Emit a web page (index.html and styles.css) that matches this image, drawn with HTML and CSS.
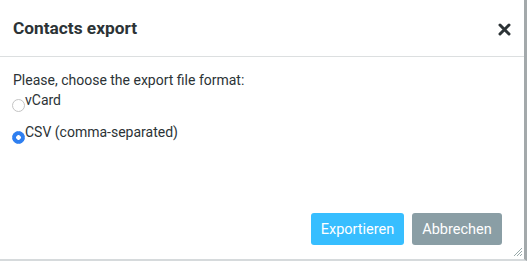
FILE: index.html
```html
<!DOCTYPE html>
<html>
<head>
<meta charset="utf-8">
<link rel="stylesheet" href="styles.css">
</head>
<body>
<div class="dialog">
  <div class="header">
    <h1 class="title">Contacts export</h1>
    <span class="close">
      <svg width="13" height="13" viewBox="0 0 13 13"><path d="M2 2L11 11M11 2L2 11" stroke="#2c3336" stroke-width="3" stroke-linecap="round"/></svg>
    </span>
  </div>
  <div class="content">
    <p class="prompt">Please, choose the export file format:</p>
    <label class="option"><span class="radio"></span>vCard</label>
    <label class="option"><span class="radio checked"></span>CSV (comma-separated)</label>
  </div>
  <div class="footer">
    <button class="btn primary">Exportieren</button>
    <button class="btn secondary">Abbrechen</button>
  </div>
  <span class="grip">
    <svg width="10" height="10" viewBox="0 0 10 10"><path d="M9 1L1 9M9 4L4 9M9 7L7 9" stroke="#9aa" stroke-width="1"/></svg>
  </span>
</div>
</body>
</html>
```
FILE: styles.css
```css
html, body { margin: 0; padding: 0; background: #fff; }
body { font-family: Roboto, "Liberation Sans", sans-serif; color: #2c3336; }
.dialog {
  position: relative;
  box-sizing: border-box;
  width: 527px;
  height: 261px;
  border-right: 3px solid #a3a9ab;
  border-bottom: 2px solid #d6dadc;
  display: flex;
  flex-direction: column;
}
.header {
  height: 57px;
  box-sizing: border-box;
  border-bottom: 1px solid #dcdfe0;
  display: flex;
  align-items: center;
  justify-content: space-between;
  padding: 0 13px 0 13px;
}
.title {
  margin: 0;
  font-size: 17.3px;
  font-weight: 700;
  color: #2c3336;
}
.close { display: flex; margin-top: 2px; }
.content { flex: 1; padding: 15px 13px 0 13px; font-size: 14px; }
.prompt { margin: 0 0 3px 0; line-height: 17px; }
.option { display: flex; align-items: flex-start; line-height: 17px; margin-bottom: 12px; }
.option .radio {
  flex: none;
  width: 11px; height: 11px; border-radius: 50%;
  border: 1px solid #c4c4c4; background: #fff;
  margin: 7px 0 0 -1px;
}
.option .radio.checked {
  border-color: #2f7ff0;
  background: radial-gradient(circle, #fff 0 2px, #2f7ff0 2.6px);
}
.footer {
  display: flex;
  justify-content: flex-end;
  gap: 8px;
  padding: 0 22px 14px 0;
}
.btn {
  font-family: Roboto, "Liberation Sans", sans-serif;
  font-size: 14.5px;
  color: #fff;
  border: none;
  border-radius: 3px;
  height: 32px;
  padding: 0 6px;
}
.primary { background: #37beff; width: 93px; }
.secondary { background: #8a9ea5; width: 90px; }
.grip { position: absolute; right: 1px; bottom: 2px; display: flex; }
```
